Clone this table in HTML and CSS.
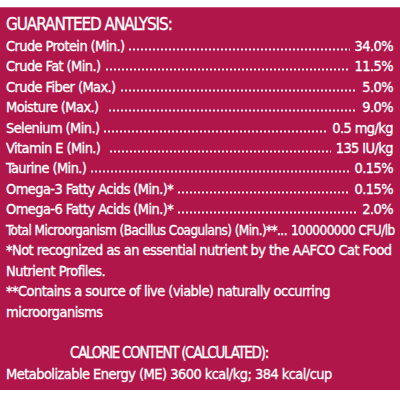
FILE: index.html
```html
<!DOCTYPE html>
<html lang="en">
<head>
  <meta charset="utf-8">
  <title>Guaranteed Analysis</title>
  <link rel="stylesheet" href="styles.css">
</head>
<body>
  <div class="panel">
    <h1 class="title">GUARANTEED ANALYSIS:</h1>
    <ul class="facts">
      <li class="fact"><span class="label">Crude Protein (Min.)</span><span class="dots"></span><span class="val">34.0%</span></li>
      <li class="fact"><span class="label">Crude Fat (Min.)</span><span class="dots"></span><span class="val">11.5%</span></li>
      <li class="fact"><span class="label">Crude Fiber (Max.)</span><span class="dots"></span><span class="val">5.0%</span></li>
      <li class="fact"><span class="label">Moisture (Max.)</span><span class="dots wide"></span><span class="val">9.0%</span></li>
      <li class="fact"><span class="label">Selenium (Min.)</span><span class="dots"></span><span class="val">0.5 mg/kg</span></li>
      <li class="fact"><span class="label">Vitamin E (Min.)</span><span class="dots wide"></span><span class="val">135 IU/kg</span></li>
      <li class="fact"><span class="label">Taurine (Min.)</span><span class="dots"></span><span class="val">0.15%</span></li>
      <li class="fact"><span class="label">Omega-3 Fatty Acids (Min.)*</span><span class="dots"></span><span class="val">0.15%</span></li>
      <li class="fact"><span class="label">Omega-6 Fatty Acids (Min.)*</span><span class="dots"></span><span class="val">2.0%</span></li>
      <li class="fact small"><span class="label">Total Microorganism (Bacillus Coagulans) (Min.)**...</span><span class="val">100000000 CFU/lb</span></li>
    </ul>
    <p class="note">*Not recognized as an essential nutrient by the AAFCO Cat Food<br>Nutrient Profiles.</p>
    <p class="note">**Contains a source of live (viable) naturally occurring<br>microorganisms</p>

    <h2 class="calorie-title">CALORIE CONTENT (CALCULATED):</h2>
    <p class="calorie">Metabolizable Energy (ME) 3600 kcal/kg; 384 kcal/cup</p>
  </div>
</body>
</html>
```

FILE: styles.css
```css
html, body {
  margin: 0; padding: 0;
  background: #fff;
}
body {
  width: 400px; height: 400px;
  overflow: hidden;
  font-family: "DejaVu Sans Condensed", "DejaVu Sans", sans-serif;
  font-stretch: condensed;
  color: #fff;
  -webkit-text-stroke: 0.3px #fff;
}
.panel {
  margin-top: 7px;
  height: 383px;
  box-sizing: border-box;
  background: #b0164a;
  border-top: 1px solid #c9577a;
  padding: 6px 7px 0 6px;
}
.title {
  margin: 0;
  font-size: 17px;
  font-weight: 400;
  line-height: 20px;
  letter-spacing: -1.1px;
}
.facts {
  list-style: none;
  margin: 2px 0 0 0; padding: 0;
}
.fact {
  display: flex;
  align-items: baseline;
  font-size: 14.5px;
  line-height: 20.4px;
  letter-spacing: -0.6px;
  white-space: nowrap;
}
.dots {
  flex: 1;
  height: 3px;
  margin: 0 5px 0 4px;
  background-image: radial-gradient(circle, #fff 0.9px, transparent 1.3px);
  background-size: 4px 3px;
  background-repeat: repeat-x;
  background-position: left bottom;
}
.dots.wide { margin-left: 9px; }
.fact.small {
  justify-content: space-between;
  gap: 4px;
  font-size: 13.5px;
  letter-spacing: -0.58px;
}
.note {
  margin: 0;
  font-size: 14.5px;
  line-height: 20.6px;
  letter-spacing: -0.55px;
  white-space: nowrap;
}
.calorie-title {
  margin: 21px 0 0 0;
  padding-left: 64px;
  font-size: 15px;
  font-weight: 400;
  line-height: 20.4px;
  letter-spacing: -1.3px;
}
.calorie {
  margin: 0;
  font-size: 14.5px;
  line-height: 20.4px;
  letter-spacing: -0.55px;
  white-space: nowrap;
}
```
